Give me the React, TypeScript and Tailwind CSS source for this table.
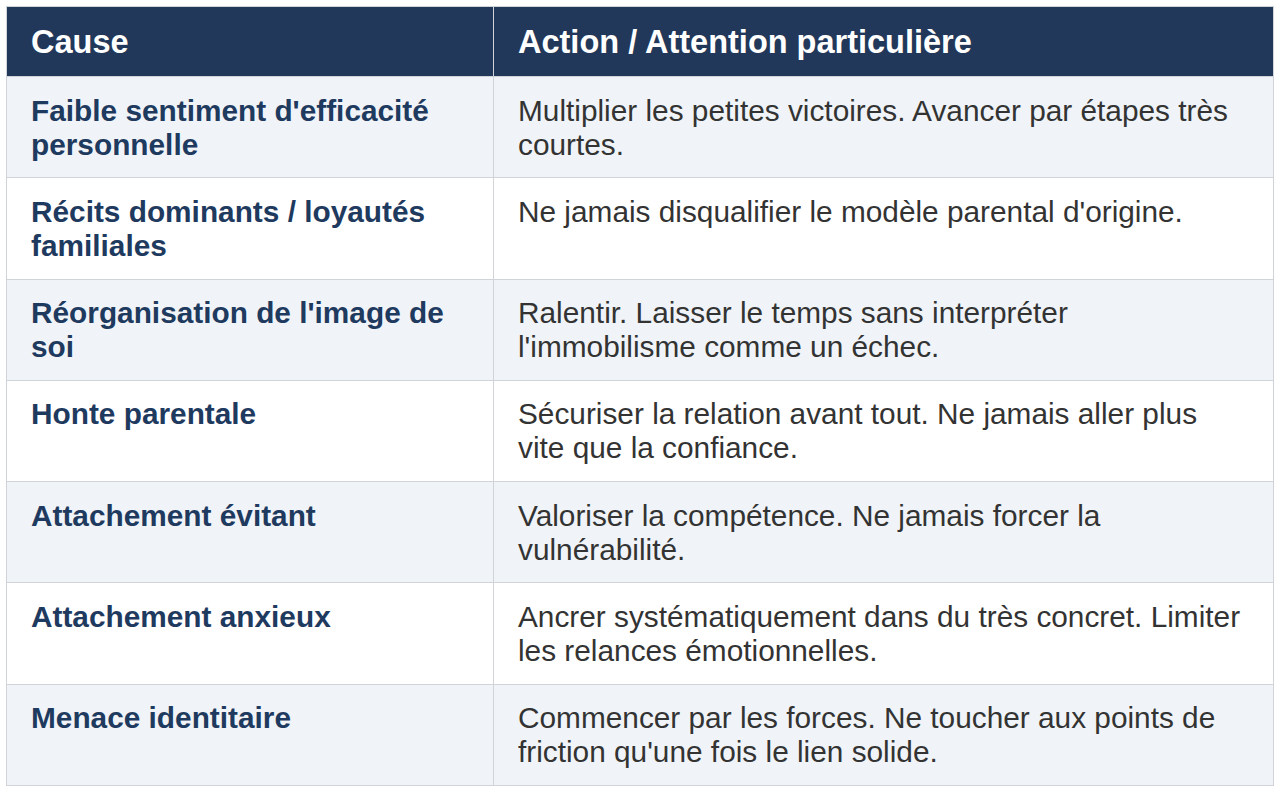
import React from "react";

const rows: [string, string][] = [
  ["Faible sentiment d'efficacité personnelle", "Multiplier les petites victoires. Avancer par étapes très courtes."],
  ["Récits dominants / loyautés familiales", "Ne jamais disqualifier le modèle parental d'origine."],
  ["Réorganisation de l'image de soi", "Ralentir. Laisser le temps sans interpréter l'immobilisme comme un échec."],
  ["Honte parentale", "Sécuriser la relation avant tout. Ne jamais aller plus vite que la confiance."],
  ["Attachement évitant", "Valoriser la compétence. Ne jamais forcer la vulnérabilité."],
  ["Attachement anxieux", "Ancrer systématiquement dans du très concret. Limiter les relances émotionnelles."],
  ["Menace identitaire", "Commencer par les forces. Ne toucher aux points de friction qu'une fois le lien solide."],
];

export default function App() {
  return (
    <div className="bg-white min-h-[804px] pt-[6px] pl-[6px] font-['Liberation_Sans',Arial,sans-serif]">
      <table className="w-[1268px] border-collapse table-fixed text-[29.8px] leading-[34px]">
        <colgroup>
          <col className="w-[487px]" />
          <col />
        </colgroup>
        <thead>
          <tr className="bg-[#22385a] text-white text-[32.5px]">
            <th className="text-left font-bold px-6 py-[17px] h-[70px] border border-[#d0d4d9]">Cause</th>
            <th className="text-left font-bold px-6 py-[17px] h-[70px] border border-[#d0d4d9]">Action / Attention particulière</th>
          </tr>
        </thead>
        <tbody>
          {rows.map(([cause, action], i) => (
            <tr key={i} className={i % 2 === 0 ? "bg-[#f0f4f8]" : "bg-white"}>
              <td className="align-top px-6 pt-[16.5px] pb-[14px] h-[101.3px] border border-[#d0d4d9] font-bold text-[#1f3a5f]">{cause}</td>
              <td className="align-top px-6 pt-[16.5px] pb-[14px] h-[101.3px] border border-[#d0d4d9] text-[#333333]">{action}</td>
            </tr>
          ))}
        </tbody>
      </table>
    </div>
  );
}
